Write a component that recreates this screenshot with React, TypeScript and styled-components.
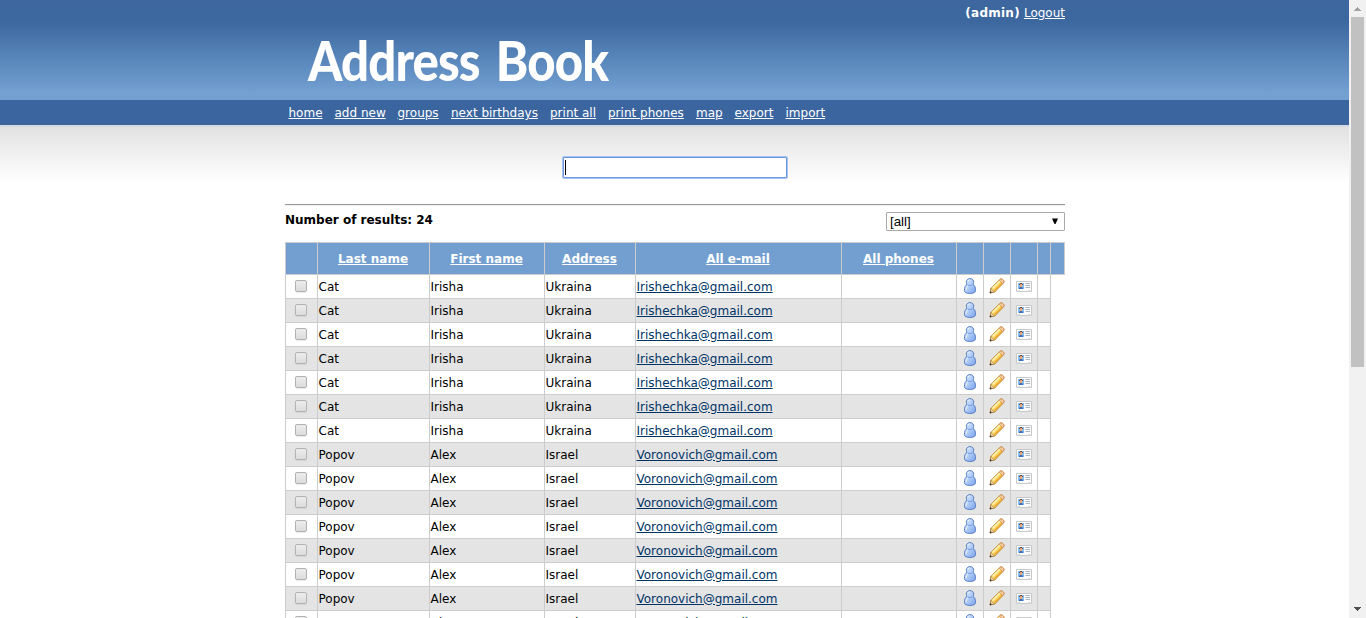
import React from "react";
import styled, { createGlobalStyle } from "styled-components";

const Global = createGlobalStyle`
  * { box-sizing: border-box; }
  html, body { margin: 0; height: 100%; overflow: hidden; }
  body { font: 12px/16px Verdana, "DejaVu Sans", sans-serif; color: #000; background: #fff; }
`;

const Window = styled.div`
  display: flex;
  width: 100%;
  height: 618px;
  overflow: hidden;
`;

const Page = styled.div`
  flex: 0 0 1349px;
  height: 618px;
  overflow: hidden;
  background: linear-gradient(#e2e2e2, #fff) 0 127px / 100% 56px no-repeat #fff;
`;

const Header = styled.header`
  height: 100px;
  padding: 5px 284px 0 285px;
  background: linear-gradient(#3d679e 0, #3c679f 22px, #5b89bd 62px, #739fd1 92px, #739fd1 100px);
  color: #fff;
`;

const Account = styled.div`
  display: flex;
  justify-content: flex-end;
  gap: 4px;
  height: 16px;
`;

const Fit = styled.span<{ $gap?: number }>`
  letter-spacing: ${(p) => p.$gap ?? 0}px;
  white-space: nowrap;
`;

const Link = styled.a<{ $gap?: number }>`
  color: inherit;
  text-decoration: underline;
  letter-spacing: ${(p) => p.$gap ?? 0}px;
  white-space: nowrap;
`;

const Logo = styled.h1`
  display: flex;
  gap: 18px;
  margin: 6px 0 0 23px;
  font: 900 55px/66px Lato, sans-serif;
  height: 66px;
  transform: scaleX(0.894);
  transform-origin: left;
`;

const Nav = styled.nav`
  display: flex;
  height: 27px;
  padding: 5px 0 0 288.5px;
  background: linear-gradient(#3b659f 0, #3b659f 24px, #426597 24px, #426597 25px, #d3dae5 25px);
  color: #fff;
`;

const NavItem = styled.div<{ $width: number }>`
  flex: 0 0 ${(p) => p.$width}px;
  white-space: nowrap;
`;

const Content = styled.main`
  width: 780px;
  margin-left: 285px;
`;

const SearchBar = styled.div`
  display: flex;
  justify-content: center;
  height: 77px;
  padding-top: 30px;
`;

const SearchBox = styled.div`
  width: 224px;
  height: 21px;
  padding: 2px 1px;
  border: 1px solid #6d96dd;
  box-shadow: 0 0 0 1px #a6c3f5;
  border-radius: 1px;
  background: #fff;
`;

const Caret = styled.i`
  display: block;
  width: 1px;
  height: 15px;
  background: #000;
`;

const Summary = styled.div`
  display: flex;
  justify-content: space-between;
  height: 38px;
  padding-top: 7px;
  border-top: 1px solid #999;
  box-shadow: inset 0 1px #eee;
  font-weight: bold;
`;

const Select = styled.div`
  display: flex;
  justify-content: space-between;
  align-items: center;
  width: 179px;
  height: 19px;
  padding: 0 5px 0 3px;
  border: 1px solid #a9a9a9;
  border-radius: 1px;
  font: 13.33px/16px "Liberation Sans", Arial, sans-serif;
`;

const Row = styled.div<{ $shaded?: boolean; $head?: boolean }>`
  display: grid;
  grid-template-columns: 32px 112px 115px 91px 206px 115px 27px 27px 27px 13px 14px;
  width: ${(p) => (p.$head ? 780 : 766)}px;
  height: ${(p) => (p.$head ? 33 : 24)}px;
  overflow: hidden;
  border-left: 1px solid #ccc;
  border-top: ${(p) => (p.$head ? "1px solid #ccc" : "0")};
  background: ${(p) => (p.$head ? "#739fd0" : p.$shaded ? "#e4e4e4" : "#fff")};
`;

const Cell = styled.div<{ $center?: boolean }>`
  display: flex;
  align-items: center;
  justify-content: ${(p) => (p.$center ? "center" : "flex-start")};
  padding-left: ${(p) => (p.$center ? 0 : 0.5)}px;
  border-right: 1px solid #ccc;
  border-bottom: 1px solid #ccc;

  svg {
    margin-bottom: 1px;
  }
`;

const HeadCell = styled(Cell)`
  padding-right: 1px;
  color: #fff;
  font-weight: bold;
`;

const Mail = styled(Link)`
  color: #036;
`;

const CheckBox = styled.span`
  width: 12px;
  height: 12px;
  margin: 0 1px 1px 0;
  border: 1px solid #b2b2b2;
  border-radius: 2px;
  background: linear-gradient(#ededed, #dcdcdc);
  box-shadow: 0 1px 1px rgba(0, 0, 0, 0.08);
`;

const ScrollBar = styled.div`
  flex: 1;
  display: flex;
  flex-direction: column;
  align-items: center;
  justify-content: space-between;
  height: 618px;
  padding: 7px 0;
  background: #f1f1f1;
`;

const Thumb = styled.div`
  width: 13px;
  height: 350px;
  margin: 6px 0 auto 0;
  background: #c1c1c1;
`;

const UserIcon = () => (
  <svg width="16" height="16" viewBox="0 0 16 16">
    <defs>
      <linearGradient id="userFill" x2="1" y2="1">
        <stop stopColor="#e0ebff" />
        <stop offset=".55" stopColor="#a9c6f5" />
        <stop offset="1" stopColor="#7ba3ea" />
      </linearGradient>
    </defs>
    <path
      d="M8 .6C5.600.6 4.300 2.200 4.300 4.200c0 .9.3 1.700.7 2.300C3.200 7.300 2.400 9.500 2.400 12.400c0 2.100 2 3 5.600 3s5.600-.9 5.600-3c0-2.900-.8-5.100-2.600-5.900.4-.6.7-1.400.7-2.300C11.700 2.200 10.400.6 8 .6z"
      fill="url(#userFill)"
      stroke="#4c74bd"
      strokeWidth=".9"
    />
    <path d="M5.700 3.800q.4-1.900 2.200-1.900M3.900 12q.1-3 1.800-4.200" fill="none" stroke="#eff5ff" />
    <path d="M5.800 7q2.200 1.300 4.400 0" fill="none" stroke="#6f96dc" strokeWidth=".8" />
  </svg>
);

const PencilIcon = () => (
  <svg width="16" height="16" viewBox="0 0 16 16">
    <path d="M1 15l1-4.700L11.100 1.200q1.200-1 2.400.1l1.100 1.100q1 1.200 0 2.400L5.700 14z" fill="#fad45c" stroke="#b5791f" strokeWidth=".9" />
    <path d="M3.500 10.500L11 3" stroke="#fff3b4" strokeWidth="1.700" />
    <path d="M5.500 12.700L13 5.200" stroke="#eaa831" strokeWidth="1.200" />
    <path d="M10.300 2.200l1-1q1-.8 2.100.2l1.100 1.100q.9 1.100 0 2.100l-1 1z" fill="#f5cda5" stroke="#c6844f" strokeWidth=".7" />
    <path d="M2.100 10.700l3.200 3.100L1 15z" fill="#f2dcb6" stroke="#8d6536" strokeWidth=".5" />
    <path d="M.8 15.200l.5-2.200 1.700 1.600z" fill="#333" />
  </svg>
);

const CardIcon = () => (
  <svg width="16" height="16" viewBox="0 0 16 16">
    <path d="M.5 3.500h15v10h-2v-1h-1v1h-9v-1h-1v1h-2z" fill="#fdfdfd" stroke="#c8c8c8" />
    <path d="M2 5h6v6H2z" fill="#86bdf3" />
    <path d="M4 6h2v3H4z" fill="#eba777" />
    <path d="M4 5h2v1h1v1H6V6H4v1H3V6h1z" fill="#6b4a38" />
    <path d="M3 9.500h1V9h2v.5h1V11H3z" fill="#3a73b4" />
    <path d="M9.500 5.500H14M9.500 7.500H14M9.500 9.500H14" stroke="#a9b5bf" />
  </svg>
);

const Arrow = ({ down = false }: { down?: boolean }) => (
  <svg width="7" height="4" viewBox="0 0 7 4" shapeRendering="crispEdges">
    <path d={down ? "M0 0h7v1H6v1H5v1H4v1H3V3H2V2H1V1H0z" : "M0 4h7V3H6V2H5V1H4V0H3v1H2v1H1v1H0z"} fill={down ? "#505050" : "#a3a3a3"} />
  </svg>
);

const nav: [string, number][] = [
  ["home", 46], ["add new", 63], ["groups", 53.5], ["next birthdays", 99], ["print all", 58],
  ["print phones", 88], ["map", 38.5], ["export", 51], ["import", 50],
];

const heads = ["", "Last name", "First name", "Address", "All e-mail", "All phones", "", "", "", "", ""];

const cat = { last: "Cat", first: "Irisha", address: "Ukraina", mail: "Irishechka@gmail.com" };
const popov = { last: "Popov", first: "Alex", address: "Israel", mail: "Voronovich@gmail.com" };
const contacts = [...Array(7).fill(cat), ...Array(8).fill(popov)];

export default function App() {
  return (
    <Window>
      <Global />
      <Page>
        <Header>
          <Account>
            <b><Fit $gap={0.25}>(admin)</Fit></b>
            <Link>Logout</Link>
          </Account>
          <Logo>
            <Fit $gap={-1}>Address</Fit>
            <Fit $gap={-1}>Book</Fit>
          </Logo>
        </Header>
        <Nav>
          {nav.map(([label, width]) => (
            <NavItem key={label} $width={width}><Link>{label}</Link></NavItem>
          ))}
        </Nav>
        <Content>
          <SearchBar><SearchBox><Caret /></SearchBox></SearchBar>
          <Summary>
            <Fit>Number of results: 24</Fit>
            <Select>
              [all]
              <svg width="8" height="7" viewBox="0 0 8 7"><path d="M1 .5h6L4.500 6h-1z" /></svg>
            </Select>
          </Summary>
          <Row $head>
            {heads.map((label, i) => (
              <HeadCell key={i} $center>{label && <Link>{label}</Link>}</HeadCell>
            ))}
          </Row>
          {contacts.map((c, i) => (
            <Row key={i} $shaded={i % 2 === 1}>
              <Cell $center><CheckBox /></Cell>
              <Cell><Fit>{c.last}</Fit></Cell>
              <Cell><Fit>{c.first}</Fit></Cell>
              <Cell><Fit>{c.address}</Fit></Cell>
              <Cell><Mail>{c.mail}</Mail></Cell>
              <Cell />
              <Cell $center><UserIcon /></Cell>
              <Cell $center><PencilIcon /></Cell>
              <Cell $center><CardIcon /></Cell>
              <Cell />
            </Row>
          ))}
        </Content>
      </Page>
      <ScrollBar>
        <Arrow />
        <Thumb />
        <Arrow down />
      </ScrollBar>
    </Window>
  );
}
